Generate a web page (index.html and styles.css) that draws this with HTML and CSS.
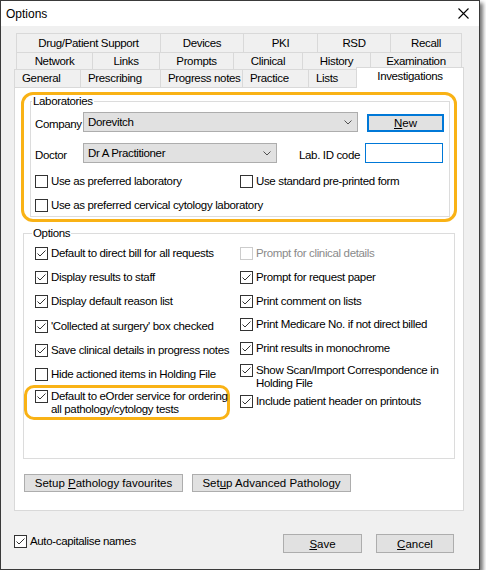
FILE: index.html
```html
<!DOCTYPE html>
<html lang="en">
<head>
<meta charset="utf-8">
<title>Options</title>
<link rel="stylesheet" href="styles.css">
</head>
<body>
<div class="window">
	<div class="titlebar">
		<span class="title">Options</span>
		<svg class="close" width="11" height="11" viewBox="0 0 11 11"><path d="M0.5 0.5L10.5 10.5M10.5 0.5L0.5 10.5" stroke="#000" stroke-width="1.1" fill="none"/></svg>
	</div>

	<div class="tabs">
		<div class="tab_row row_back">
			<div class="tab" style="width:144px">Drug/Patient Support</div>
			<div class="tab" style="width:83px">Devices</div>
			<div class="tab" style="width:74px">PKI</div>
			<div class="tab" style="width:73px">RSD</div>
			<div class="tab" style="width:72px">Recall</div>
		</div>
		<div class="tab_row row_back row_mid">
			<div class="tab" style="width:76px">Network</div>
			<div class="tab" style="width:67px">Links</div>
			<div class="tab" style="width:74px">Prompts</div>
			<div class="tab" style="width:69px">Clinical</div>
			<div class="tab" style="width:68px">History</div>
			<div class="tab" style="width:92px">Examination</div>
		</div>
		<div class="tab_row row_front">
			<div class="tab" style="width:66px">General</div>
			<div class="tab" style="width:80px">Prescribing</div>
			<div class="tab" style="width:82px">Progress notes</div>
			<div class="tab" style="width:66px">Practice</div>
			<div class="tab" style="width:48px">Lists</div>
			<div class="tab on" style="width:108px">Investigations</div>
		</div>
	</div>

	<div class="panel">
		<div class="hl hl_lab">
			<fieldset class="group group_lab">
				<legend>Laboratories</legend>
				<div class="field_row">
					<span class="lbl">Company</span>
					<div class="combo combo_company">
						<span>Dorevitch</span>
						<svg width="8" height="5" viewBox="0 0 8 5"><path d="M0.5 0.5L4 4L7.5 0.5" stroke="#505050" fill="none"/></svg>
					</div>
					<button class="btn btn_default"><u>N</u>ew</button>
				</div>
				<div class="field_row row_doctor">
					<span class="lbl">Doctor</span>
					<div class="combo combo_doctor">
						<span>Dr A Practitioner</span>
						<svg width="8" height="5" viewBox="0 0 8 5"><path d="M0.5 0.5L4 4L7.5 0.5" stroke="#505050" fill="none"/></svg>
					</div>
					<span class="lbl lbl_code">Lab. ID code</span>
					<div class="textbox"></div>
				</div>
				<div class="cb_row">
					<label class="cb cb_wide"><span class="box"></span>Use as preferred laboratory</label>
					<label class="cb"><span class="box"></span>Use standard pre-printed form</label>
				</div>
				<div class="cb_row row_second">
					<label class="cb"><span class="box"></span>Use as preferred cervical cytology laboratory</label>
				</div>
			</fieldset>
		</div>

		<fieldset class="group group_opt">
			<legend>Options</legend>
			<div class="opt_cols">
				<div class="col col_left">
					<label class="cb"><span class="box checked"></span>Default to direct bill for all requests</label>
					<label class="cb"><span class="box checked"></span>Display results to staff</label>
					<label class="cb"><span class="box checked"></span>Display default reason list</label>
					<label class="cb"><span class="box checked"></span>'Collected at surgery' box checked</label>
					<label class="cb"><span class="box checked"></span>Save clinical details in progress notes</label>
					<label class="cb"><span class="box"></span>Hide actioned items in Holding File</label>
					<div class="hl hl_eorder">
						<label class="cb"><span class="box checked"></span>Default to eOrder service for ordering<br>all pathology/cytology tests</label>
					</div>
				</div>
				<div class="col col_right">
					<label class="cb disabled"><span class="box"></span>Prompt for clinical details</label>
					<label class="cb"><span class="box checked"></span>Prompt for request paper</label>
					<label class="cb"><span class="box checked"></span>Print comment on lists</label>
					<label class="cb"><span class="box checked"></span>Print Medicare No. if not direct billed</label>
					<label class="cb"><span class="box checked"></span>Print results in monochrome</label>
					<label class="cb cb_tall"><span class="box checked"></span>Show Scan/Import Correspondence in<br>Holding File</label>
					<label class="cb"><span class="box checked"></span>Include patient header on printouts</label>
				</div>
			</div>
		</fieldset>

		<div class="setup">
			<button class="btn btn_setup">Setup <u>P</u>athology favourites</button>
			<button class="btn btn_setup">Set<u>u</u>p Advanced Pathology</button>
		</div>
	</div>

	<div class="footer">
		<label class="cb cb_caps"><span class="box checked"></span>Auto-capitalise names</label>
		<button class="btn btn_save"><u>S</u>ave</button>
		<button class="btn btn_cancel"><u>C</u>ancel</button>
	</div>
</div>
</body>
</html>
```

FILE: styles.css
```css
* {box-sizing:border-box}
body {
	margin:0;
	background:#fff;
	font-family:"Liberation Sans", Arial, sans-serif;
	font-size:11.5px;
	letter-spacing:-0.35px;
	color:#000;
}

.window {
	width:480px;
	height:570px;
	border:1px solid #3a3a3a;
	background:#f0f0f0;
	box-shadow:3px 3px 4px rgba(0,0,0,.55);
}
.titlebar {
	height:25px;
	background:#fff;
	display:flex;
	align-items:center;
	justify-content:space-between;
	padding:0 10px 0 5px;
}
.title {font-size:12px; letter-spacing:0}

/* tab strip, three rows */
.tabs {margin:7px 0 0 13px; width:450px}
.tab_row {display:flex}
.row_back {margin-left:2px; width:446px}
.tab {
	border:1px solid #d9d9d9;
	border-right:none;
	border-bottom:none;
	text-align:center;
	white-space:nowrap;
	line-height:18px;
	height:19px;
}
.tab:last-child {border-right:1px solid #d9d9d9}
.row_mid .tab {line-height:16px; height:17px}
.row_front .tab {
	text-align:left;
	padding-left:7px;
	line-height:17px;
	height:18px;
}
.row_front .tab.on {
	position:relative;
	z-index:1;
	background:#fff;
	text-align:center;
	padding-left:0;
	height:21px;
	margin-top:-2px;
	margin-bottom:-1px;
}

.panel {
	margin-left:13px;
	width:450px;
	height:424px;
	background:#fff;
	border:1px solid #d9d9d9;
	padding:4px 0 0 6px;
}

.hl {border:3px solid #f9b215; border-radius:12px}
.hl_lab {width:436px; height:130px; padding:0 4px 0 6px}

fieldset.group {
	margin:0;
	min-width:0;
	border:1px solid #dcdcdc;
	padding:0 0 0 4px;
}
fieldset.group legend {padding:0 1px; line-height:13px; margin-left:-3px}
fieldset.group_lab {height:122px}

.field_row {display:flex; align-items:flex-end; margin-top:4px}
.row_doctor {margin-top:11px}
.lbl {width:48px; line-height:13px; margin-bottom:1px; flex:none}
.lbl_code {width:auto; margin-left:22px}

.combo {
	display:flex;
	align-items:center;
	justify-content:space-between;
	height:20px;
	padding:0 5px 0 4px;
	background:#e1e1e1;
	border:1px solid #adadad;
}
.combo svg {display:block}
.combo_company {width:275px}
.combo_doctor {width:194px}
.textbox {
	width:78px;
	height:20px;
	margin-left:5px;
	background:#fff;
	border:1px solid #0078d7;
}

.btn {
	font:inherit;
	color:#000;
	padding:0;
	background:#e1e1e1;
	border:1px solid #adadad;
	text-align:center;
}
.btn_default {width:77px; height:18px; margin-left:9px; border:2px solid #0078d7}

/* checkboxes */
.cb {display:flex; align-items:flex-start; line-height:13px; white-space:nowrap}
.box {
	flex:none;
	width:13px;
	height:13px;
	margin-right:3px;
	border:1px solid #333;
	background:#fff;
}
.box.checked {
	background:#fff url("data:image/svg+xml,%3Csvg xmlns='http://www.w3.org/2000/svg' width='11' height='11'%3E%3Cpath d='M1.5 5.5L4 8L9.5 2.5' stroke='%23333' stroke-width='1' fill='none'/%3E%3C/svg%3E") no-repeat center;
}
.cb.disabled {color:#8a8a8a}
.cb.disabled .box {border-color:#cccccc}

.cb_row {display:flex; margin-top:12px}
.cb_row.row_second {margin-top:11px}
.cb_wide {width:205px}

fieldset.group_opt {
	margin:5px 0 0 2px;
	width:432px;
	height:232px;
	padding:7px 0 0 11px;
}
.opt_cols {display:flex}
.col {display:flex; flex-direction:column}
.col_left {width:205px; gap:11.2px}
.col_right {gap:10.75px}
.cb_tall {margin:-2px 0 -6px}
.hl_eorder {
	width:206px;
	margin:-6.7px 0 0 -11px;
	padding:1.5px 0 1.5px 8px;
	border-radius:10px;
}

.setup {display:flex; gap:9px; margin:15px 0 0 3px}
.btn_setup {width:159px; height:18px; line-height:16px}

.footer {
	display:flex;
	align-items:flex-start;
	padding:0 25px 0 13px;
	margin-top:23px;
}
.cb_caps {margin-top:1px}
.btn_save {margin-left:auto; width:79px; height:19px}
.btn_cancel {margin-left:14px; width:78px; height:19px}
```
